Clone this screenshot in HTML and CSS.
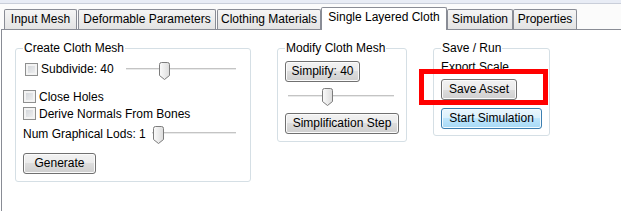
FILE: index.html
```html
<!DOCTYPE html>
<html>
<head>
<meta charset="utf-8">
<title>Single Layered Cloth</title>
<link rel="stylesheet" href="styles.css">
</head>
<body>
<div class="app">
  <div class="topstrip"></div>
  <div class="tabbar">
    <div class="tab tab-input">Input Mesh</div>
    <div class="tab tab-deform">Deformable Parameters</div>
    <div class="tab tab-materials">Clothing Materials</div>
    <div class="tab tab-single selected">Single Layered Cloth</div>
    <div class="tab tab-sim">Simulation</div>
    <div class="tab tab-props">Properties</div>
  </div>
  <div class="pane">
    <fieldset class="group group-create">
      <legend>Create Cloth Mesh</legend>
      <div class="row row-subdivide">
        <label class="check"><span class="box"></span>Subdivide: 40</label>
        <svg class="slider slider-subdivide" width="110" height="21" viewBox="0 0 110 21">
          <defs>
            <linearGradient id="thumbfill" x1="0" y1="0" x2="1" y2="0">
              <stop offset="0" stop-color="#fbfbfb"/>
              <stop offset="1" stop-color="#dcdcdc"/>
            </linearGradient>
          </defs>
          <rect x="0" y="9" width="110" height="1" fill="#c4c4c4"/>
          <rect x="0" y="10" width="110" height="1" fill="#e9eaea"/>
          <path transform="translate(33,3)" d="M0.5,2.5 Q0.5,0.5 2.5,0.5 H8.5 Q10.5,0.5 10.5,2.5 V13.5 L5.5,17.5 L0.5,13.5 Z" fill="url(#thumbfill)" stroke="#7c7c7c"/>
        </svg>
      </div>
      <div class="row row-check">
        <label class="check"><span class="box"></span>Close Holes</label>
      </div>
      <div class="row row-check">
        <label class="check"><span class="box"></span>Derive Normals From Bones</label>
      </div>
      <div class="row row-lods">
        <span class="label">Num Graphical Lods: 1</span>
        <svg class="slider slider-lods" width="84" height="20" viewBox="0 0 84 20">
          <rect x="0" y="8" width="84" height="1" fill="#c4c4c4"/>
          <rect x="0" y="9" width="84" height="1" fill="#e9eaea"/>
          <path transform="translate(1,2)" d="M0.5,2.5 Q0.5,0.5 2.5,0.5 H8.5 Q10.5,0.5 10.5,2.5 V13.5 L5.5,17.5 L0.5,13.5 Z" fill="url(#thumbfill)" stroke="#7c7c7c"/>
        </svg>
      </div>
      <button class="btn btn-generate">Generate</button>
    </fieldset>

    <fieldset class="group group-modify">
      <legend>Modify Cloth Mesh</legend>
      <button class="btn btn-simplify">Simplify: 40</button>
      <svg class="slider slider-simplify" width="106" height="20" viewBox="0 0 106 20">
        <rect x="0" y="9" width="106" height="1" fill="#c4c4c4"/>
        <rect x="0" y="10" width="106" height="1" fill="#e9eaea"/>
        <path transform="translate(34,2)" d="M0.5,2.5 Q0.5,0.5 2.5,0.5 H8.5 Q10.5,0.5 10.5,2.5 V13.5 L5.5,17.5 L0.5,13.5 Z" fill="url(#thumbfill)" stroke="#7c7c7c"/>
      </svg>
      <button class="btn btn-step">Simplification Step</button>
    </fieldset>

    <fieldset class="group group-save">
      <legend>Save / Run</legend>
      <div class="label label-export">Export Scale</div>
      <button class="btn btn-save">Save Asset</button>
      <button class="btn btn-start">Start Simulation</button>
    </fieldset>
  </div>
  <div class="annotation"></div>
</div>
</body>
</html>
```

FILE: styles.css
```css
html, body {
  margin: 0;
  padding: 0;
  background: #ffffff;
  overflow: hidden;
}

body {
  font-family: "Liberation Sans", Arial, sans-serif;
  font-size: 12px;
  line-height: 14px;
  color: #000;
}

.app {
  position: relative;
  width: 621px;
  height: 211px;
  overflow: hidden;
}

.topstrip {
  height: 3px;
  background: #e8ecf5;
  border-bottom: 1px solid #c9ced9;
}

.tabbar {
  display: flex;
  align-items: flex-end;
  height: 25px;
  background: #fbfbfb;
}

.tab {
  box-sizing: border-box;
  height: 20px;
  padding-top: 2px;
  border: 1px solid #898c95;
  border-bottom: none;
  border-radius: 2px 2px 0 0;
  background: linear-gradient(#f5f5f5, #e3e3e3);
  text-align: center;
  white-space: nowrap;
}

.tab.selected {
  position: relative;
  z-index: 1;
  height: 23px;
  margin-bottom: -1px;
  background: #ffffff;
}

.tab-input { margin-left: 4px; width: 73px; }
.tab-deform { margin-left: 1px; width: 138px; }
.tab-materials { margin-left: 1px; width: 104px; }
.tab-single { width: 126px; }
.tab-sim { width: 66px; }
.tab-props { width: 64px; }

.pane {
  display: flex;
  align-items: flex-start;
  gap: 26px;
  margin-left: 1px;
  height: 200px;
  padding: 11px 0 0 13px;
  border-left: 1px solid #898c95;
  border-top: 1px solid #898c95;
  background: #ffffff;
}

.group {
  box-sizing: border-box;
  display: flex;
  flex-direction: column;
  align-items: flex-start;
  margin: 0;
  min-width: 0;
  padding: 4px 7px 7px 7px;
  border: 1px solid #d5dfe5;
  border-radius: 3px;
}

.group legend {
  padding: 0 1px;
  line-height: 14px;
}

.group-create { width: 236px; padding-right: 14px; }
.group-modify { width: 130px; }
.group-save { width: 117px; padding-bottom: 6px; }

.row {
  display: flex;
  align-items: center;
  justify-content: space-between;
  align-self: stretch;
}

.row-subdivide {
  height: 20px;
  padding-left: 2px;
}

.row-subdivide .slider { align-self: flex-start; }

.row-check {
  height: 17px;
}

.row-subdivide + .row-check { margin-top: 9px; }

.row-lods {
  height: 20px;
  margin-top: 2px;
}

.check {
  display: flex;
  align-items: center;
}

.box {
  box-sizing: border-box;
  width: 13px;
  height: 13px;
  margin-right: 3px;
  border: 1px solid #8e8f8f;
  background: linear-gradient(135deg, #cdd1d6, #f4f4f4);
  box-shadow: inset 0 0 0 2px #f3f3f3;
}

.slider {
  display: block;
  overflow: visible;
}

.btn {
  box-sizing: border-box;
  display: block;
  height: 21px;
  margin: 0;
  padding: 0;
  border: 1px solid #707070;
  border-radius: 3px;
  background: linear-gradient(#f2f2f2, #ebebeb 50%, #dddddd 50%, #cfcfcf);
  box-shadow: inset 0 0 0 1px #fbfbfb;
  font-family: "Liberation Sans", Arial, sans-serif;
  font-size: 12px;
  line-height: 19px;
  color: #000;
  text-align: center;
  white-space: nowrap;
}

.btn-generate { width: 73px; margin-top: 9px; }

.btn-simplify { width: 75px; margin-top: 2px; }
.slider-simplify { margin-top: 4px; margin-left: 3px; }
.btn-step { width: 114px; margin-top: 7px; }

.label-export { margin-top: 1px; }
.btn-save { width: 76px; margin-top: 5px; }
.btn-start {
  width: 101px;
  margin-top: 8px;
  border-color: #3c7fb1;
  background: linear-gradient(#eaf6fd, #d9f0fc 50%, #bee6fd 50%, #a7d9f5);
  box-shadow: inset 0 0 0 1px #f4fbff;
}

.annotation {
  position: absolute;
  left: 419px;
  top: 69px;
  width: 129px;
  height: 36px;
  box-sizing: border-box;
  border: 5px solid #ff0000;
}
```
